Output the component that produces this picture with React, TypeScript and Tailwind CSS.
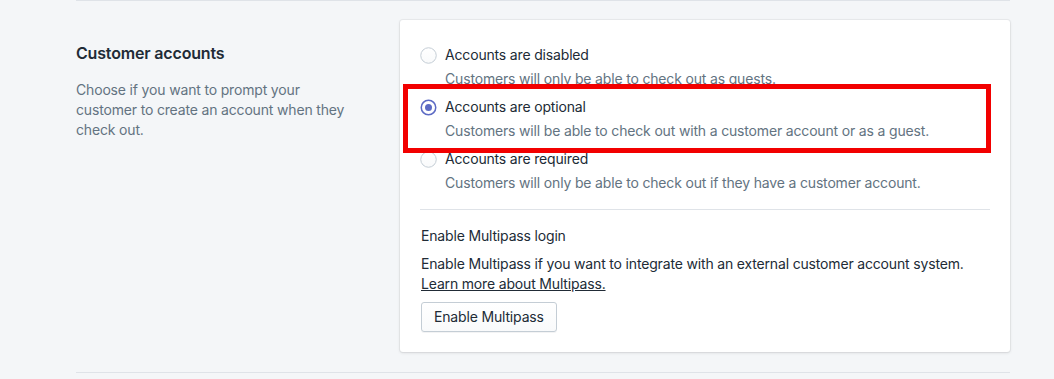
import React from "react";

type Option = {
  id: string;
  label: string;
  help: string;
};

const options: Option[] = [
  {
    id: "disabled",
    label: "Accounts are disabled",
    help: "Customers will only be able to check out as guests.",
  },
  {
    id: "optional",
    label: "Accounts are optional",
    help: "Customers will be able to check out with a customer account or as a guest.",
  },
  {
    id: "required",
    label: "Accounts are required",
    help: "Customers will only be able to check out if they have a customer account.",
  },
];

const Radio: React.FC<{ checked: boolean }> = ({ checked }) => (
  <svg width="17" height="17" viewBox="0 0 17 17" className="shrink-0">
    <defs>
      <linearGradient id="radioFill" x1="0" y1="0" x2="0" y2="1">
        <stop offset="0" stopColor="#ffffff" />
        <stop offset="1" stopColor="#f9fafb" />
      </linearGradient>
    </defs>
    {checked ? (
      <>
        <circle cx="8.5" cy="8.5" r="7.25" fill="#ffffff" stroke="#5c6ac4" strokeWidth="1.5" />
        <circle cx="8.5" cy="8.5" r="3.5" fill="#5c6ac4" />
      </>
    ) : (
      <circle cx="8.5" cy="8.5" r="7.75" fill="url(#radioFill)" stroke="#c4cdd5" strokeWidth="1" />
    )}
  </svg>
);

export default function App() {
  const selected = "optional";

  return (
    <div className="min-h-screen bg-[#f4f6f8] font-['Inter','Noto_Sans',sans-serif] text-sm tracking-[-0.012em] text-[#212b36] antialiased">
      <div className="ml-[76px] w-[934px] border-t border-[#dfe3e8]">
        <div className="flex pt-[19px] pb-5">
          <div className="w-[324px] shrink-0 pt-[21px] pr-[44px]">
            <h2 className="text-base font-semibold leading-6 text-[#212b36]">
              Customer accounts
            </h2>
            <p className="mt-[15px] leading-5 text-[#637381]">
              Choose if you want to prompt your customer to create an account
              when they check out.
            </p>
          </div>

          <div className="relative w-[610px] rounded-[3px] bg-white p-5 shadow-[0_0_0_1px_rgba(63,63,68,0.05),0_1px_3px_0_rgba(63,63,68,0.15)]">
            <ul className="pt-[5px]">
              {options.map((o) => (
                <li key={o.id} className="mb-2">
                  <label className="flex h-5 items-center gap-2 leading-5">
                    <Radio checked={o.id === selected} />
                    <span>{o.label}</span>
                  </label>
                  <p className="mt-1 pl-[25px] leading-5 text-[#637381]">{o.help}</p>
                </li>
              ))}
            </ul>

            <div className="mt-4 border-t border-[#dfe3e8] pt-4 pl-px">
              <h3 className="leading-5">Enable Multipass login</h3>
              <p className="mt-2 leading-5">
                Enable Multipass if you want to integrate with an external
                customer account system.
              </p>
              <a href="#" className="leading-5 underline">
                Learn more about Multipass.
              </a>
              <div className="mt-2">
                <button className="h-[30px] rounded-[3px] border border-[#c4cdd5] bg-gradient-to-b from-white to-[#f9fafb] px-[12px] leading-5 text-[#212b36] shadow-[0_1px_0_0_rgba(22,29,37,0.05)]">
                  Enable Multipass
                </button>
              </div>
            </div>

            <div className="pointer-events-none absolute left-[3px] top-[64px] h-[69px] w-[588px] border-[5px] border-[#f20000]" />
          </div>
        </div>
        <div className="border-t border-[#dfe3e8]" />
      </div>
    </div>
  );
}
